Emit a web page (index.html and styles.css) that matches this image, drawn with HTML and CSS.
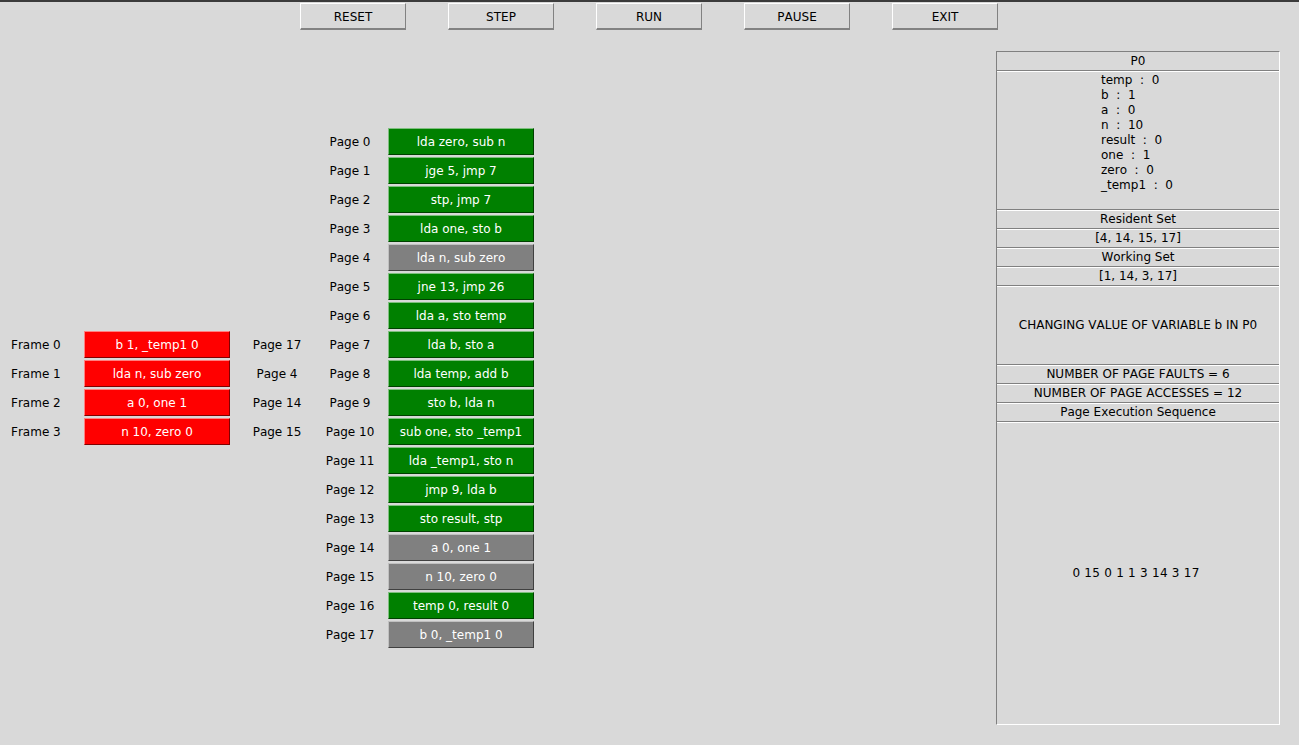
FILE: index.html
```html
<!DOCTYPE html>
<html>
<head>
<meta charset="utf-8">
<title>Paging Simulator</title>
<link rel="stylesheet" href="styles.css">
</head>
<body>
<div class="topbar"></div>
<div class="toolbar">
  <button class="btn">RESET</button>
  <button class="btn">STEP</button>
  <button class="btn">RUN</button>
  <button class="btn">PAUSE</button>
  <button class="btn">EXIT</button>
</div>
<div class="main">
  <div class="frames">
    <div class="frow"><span class="flabel">Frame 0</span><span class="box red">b 1, _temp1 0</span><span class="fpage">Page 17</span></div>
    <div class="frow"><span class="flabel">Frame 1</span><span class="box red">lda n, sub zero</span><span class="fpage">Page 4</span></div>
    <div class="frow"><span class="flabel">Frame 2</span><span class="box red">a 0, one 1</span><span class="fpage">Page 14</span></div>
    <div class="frow"><span class="flabel">Frame 3</span><span class="box red">n 10, zero 0</span><span class="fpage">Page 15</span></div>
  </div>
  <div class="pages">
    <div class="prow"><span class="plabel">Page 0</span><span class="box green">lda zero, sub n</span></div>
    <div class="prow"><span class="plabel">Page 1</span><span class="box green">jge 5, jmp 7</span></div>
    <div class="prow"><span class="plabel">Page 2</span><span class="box green">stp, jmp 7</span></div>
    <div class="prow"><span class="plabel">Page 3</span><span class="box green">lda one, sto b</span></div>
    <div class="prow"><span class="plabel">Page 4</span><span class="box gray">lda n, sub zero</span></div>
    <div class="prow"><span class="plabel">Page 5</span><span class="box green">jne 13, jmp 26</span></div>
    <div class="prow"><span class="plabel">Page 6</span><span class="box green">lda a, sto temp</span></div>
    <div class="prow"><span class="plabel">Page 7</span><span class="box green">lda b, sto a</span></div>
    <div class="prow"><span class="plabel">Page 8</span><span class="box green">lda temp, add b</span></div>
    <div class="prow"><span class="plabel">Page 9</span><span class="box green">sto b, lda n</span></div>
    <div class="prow"><span class="plabel">Page 10</span><span class="box green">sub one, sto _temp1</span></div>
    <div class="prow"><span class="plabel">Page 11</span><span class="box green">lda _temp1, sto n</span></div>
    <div class="prow"><span class="plabel">Page 12</span><span class="box green">jmp 9, lda b</span></div>
    <div class="prow"><span class="plabel">Page 13</span><span class="box green">sto result, stp</span></div>
    <div class="prow"><span class="plabel">Page 14</span><span class="box gray">a 0, one 1</span></div>
    <div class="prow"><span class="plabel">Page 15</span><span class="box gray">n 10, zero 0</span></div>
    <div class="prow"><span class="plabel">Page 16</span><span class="box green">temp 0, result 0</span></div>
    <div class="prow"><span class="plabel">Page 17</span><span class="box gray">b 0, _temp1 0</span></div>
  </div>
  <div class="panel">
    <div class="cell h19">P0</div>
    <div class="cell vars"><div class="varlist">temp  :  0
b  :  1
a  :  0
n  :  10
result  :  0
one  :  1
zero  :  0
_temp1  :  0</div></div>
    <div class="cell h19">Resident Set</div>
    <div class="cell h19">[4, 14, 15, 17]</div>
    <div class="cell h19">Working Set</div>
    <div class="cell h19">[1, 14, 3, 17]</div>
    <div class="cell msg">CHANGING VALUE OF VARIABLE b IN P0</div>
    <div class="cell h19">NUMBER OF PAGE FAULTS = 6</div>
    <div class="cell h19">NUMBER OF PAGE ACCESSES = 12</div>
    <div class="cell h19">Page Execution Sequence</div>
    <div class="cell seq">0 15 0 1 1 3 14 3 17</div>
  </div>
</div>
</body>
</html>
```
FILE: styles.css
```css
html, body {
  margin: 0;
  padding: 0;
}
body {
  background: #d9d9d9;
  font-family: "DejaVu Sans", sans-serif;
  font-size: 12px;
  font-kerning: none;
  color: #000;
  width: 1299px;
  height: 745px;
  overflow: hidden;
}
.topbar {
  height: 2px;
  background: #3b3b3b;
}
.toolbar {
  display: flex;
  gap: 42px;
  padding-left: 300px;
  margin-top: 1px;
}
.btn {
  box-sizing: border-box;
  width: 106px;
  height: 27px;
  margin: 0;
  padding: 1px 0 0 0;
  background: #d9d9d9;
  font-family: "DejaVu Sans", sans-serif;
  font-size: 12px;
  font-kerning: none;
  color: #000;
  border-style: solid;
  border-width: 1px 1px 2px 1px;
  border-color: #ffffff #828282 #828282 #ffffff;
}
.main {
  display: flex;
  align-items: flex-start;
}
.frames {
  width: 324px;
  margin-top: 301px;
  display: flex;
  flex-direction: column;
  gap: 2px;
}
.frow {
  display: flex;
  align-items: center;
  height: 27px;
}
.flabel {
  width: 84px;
  box-sizing: border-box;
  padding-left: 11px;
}
.fpage {
  width: 94px;
  text-align: center;
}
.pages {
  margin-top: 98px;
  display: flex;
  flex-direction: column;
  gap: 2px;
}
.prow {
  display: flex;
  align-items: center;
  height: 27px;
}
.plabel {
  width: 64px;
  box-sizing: border-box;
  padding-right: 12px;
  text-align: center;
}
.box {
  box-sizing: border-box;
  width: 146px;
  height: 27px;
  display: flex;
  align-items: center;
  justify-content: center;
  color: #ffffff;
  border: 1px solid;
  white-space: nowrap;
}
.green {
  background: #008000;
  border-color: #7fbf7f #004000 #004000 #7fbf7f;
}
.red {
  background: #ff0000;
  border-color: #ff8080 #800000 #800000 #ff8080;
}
.gray {
  background: #808080;
  border-color: #c0c0c0 #404040 #404040 #c0c0c0;
}
.panel {
  margin-top: 21px;
  margin-left: auto;
  margin-right: 19px;
  width: 284px;
  box-sizing: border-box;
  border: 1px solid;
  border-color: #808080 #ffffff #ffffff #808080;
  display: flex;
  flex-direction: column;
}
.cell {
  box-sizing: border-box;
  display: flex;
  align-items: center;
  justify-content: center;
  text-align: center;
  border-top: 1px solid #ffffff;
  border-bottom: 1px solid #808080;
}
.cell:first-child {
  border-top: none;
}
.h19 {
  height: 19px;
  padding-bottom: 1px;
}
.cell.h19:first-child {
  padding-bottom: 0;
}
.vars {
  height: 139px;
  align-items: flex-start;
}
.varlist {
  white-space: pre;
  text-align: left;
  line-height: 15px;
  padding-top: 1px;
  padding-right: 2px;
}
.msg {
  height: 79px;
  padding-bottom: 1px;
}
.seq {
  height: 302px;
  border-bottom: none;
  padding-bottom: 2px;
  padding-right: 4px;
  letter-spacing: 0.25px;
}
```
